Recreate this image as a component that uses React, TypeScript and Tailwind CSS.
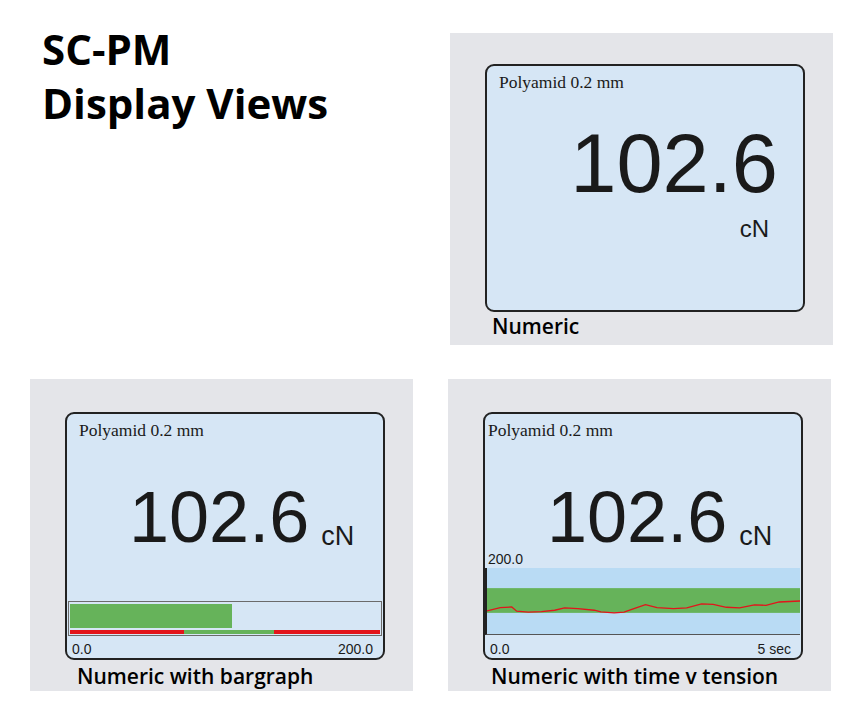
import type { ReactNode } from 'react';

// red trace of the time v tension view, in the chart's own units
const TRACE =
  '135,707 175,697 210,695 225,708 260,711 300,709 340,705 370,698 410,700 460,705 480,710 520,713 550,711 580,700 615,688 650,697 700,700 740,698 785,686 820,687 860,696 900,698 945,689 980,690 1020,680 1083,677';

function Panel({ label, labelClass, padTop, children }: { label: string; labelClass: string; padTop: string; children: ReactNode }) {
  return (
    <div className={`w-[383px] h-[312px] bg-[#e4e5e9] pl-[35px] ${padTop}`}>
      <div className="w-[320px] h-[248px] rounded-[9px] border-2 border-[#222] bg-[#d6e6f5] flex flex-col overflow-hidden">
        {children}
      </div>
      <div className={`font-['Open_Sans',sans-serif] font-semibold text-[21px] leading-none text-black ${labelClass}`}>
        {label}
      </div>
    </div>
  );
}

function Material({ className }: { className: string }) {
  return (
    <div className={`font-['Liberation_Serif',serif] text-[17.5px] leading-none text-[#1a1a1a] ${className}`}>
      Polyamid 0.2 mm
    </div>
  );
}

function Reading() {
  return (
    <div className="flex items-baseline ml-[62px] mt-[41px] font-['Liberation_Sans',Arial,sans-serif] text-[#1a1a1a]">
      <span className="text-[72px] leading-none">102.6</span>
      <span className="text-[27px] leading-none ml-[12px] translate-y-[3px]">cN</span>
    </div>
  );
}

function Scale({ right }: { right: string }) {
  return (
    <div className="flex justify-between pl-[5px] pr-[10px] mt-auto mb-[2px] font-['Liberation_Sans',Arial,sans-serif] text-[14px] leading-none text-[#1a1a1a]">
      <span>0.0</span>
      <span>{right}</span>
    </div>
  );
}

export default function App() {
  return (
    <div className="w-[862px] h-[726px] bg-white pl-[30px] pt-[33px]">
      <div className="flex">
        <h1 className="w-[420px] pl-[12px] -mt-[11px] font-['Open_Sans',sans-serif] font-bold text-[42px] leading-[54px] text-black">
          SC-PM
          <br />
          Display Views
        </h1>
        <Panel label="Numeric" labelClass="ml-[7px] mt-[4px]" padTop="pt-[31px]">
          <Material className="ml-[12px] mt-[8px]" />
          <div className="flex flex-col items-end pr-[25px] mt-[30px] font-['Liberation_Sans',Arial,sans-serif] text-[#1a1a1a]">
            <span className="text-[83px] leading-none">102.6</span>
            <span className="text-[24px] leading-none mt-[12px] mr-[9px]">cN</span>
          </div>
        </Panel>
      </div>

      <div className="flex gap-[35px] mt-[34px]">
        <Panel label="Numeric with bargraph" labelClass="ml-[12px] mt-[6px]" padTop="pt-[33px]">
          <Material className="ml-[12px] mt-[8px]" />
          <Reading />
          <div className="mt-[48px] mx-[1px] h-[35px] border border-[#6b6b6b] flex flex-col px-[1px] pt-[2px]">
            <div className="h-[24px] w-[162px] bg-[#66b35a]" />
            <div className="mt-[2px] h-[4px] flex">
              <div className="w-[114px] bg-[#e3141b]" />
              <div className="w-[90px] bg-[#66b35a]" />
              <div className="flex-1 bg-[#e3141b]" />
            </div>
          </div>
          <Scale right="200.0" />
        </Panel>

        <Panel label="Numeric with time v tension" labelClass="ml-[8px] mt-[6px]" padTop="pt-[33px]">
          <Material className="ml-[3px] mt-[8px]" />
          <Reading />
          <div className="ml-[3px] -mt-[1px] font-['Liberation_Sans',Arial,sans-serif] text-[14px] leading-none text-[#1a1a1a]">200.0</div>
          <div className="mt-[2px] mr-[1px] h-[67px] border-l-2 border-[#222] border-b border-b-[#555]">
            <svg viewBox="135 577 948 200" preserveAspectRatio="none" className="w-full h-full block">
              <rect x="135" y="577" width="948" height="200" fill="#b9dbf4" />
              <rect x="135" y="638" width="948" height="75" fill="#66b35a" />
              <polyline points={TRACE} fill="none" stroke="#e3141b" vectorEffect="non-scaling-stroke" style={{ strokeWidth: 1.3 }} />
            </svg>
          </div>
          <Scale right="5 sec" />
        </Panel>
      </div>
    </div>
  );
}
